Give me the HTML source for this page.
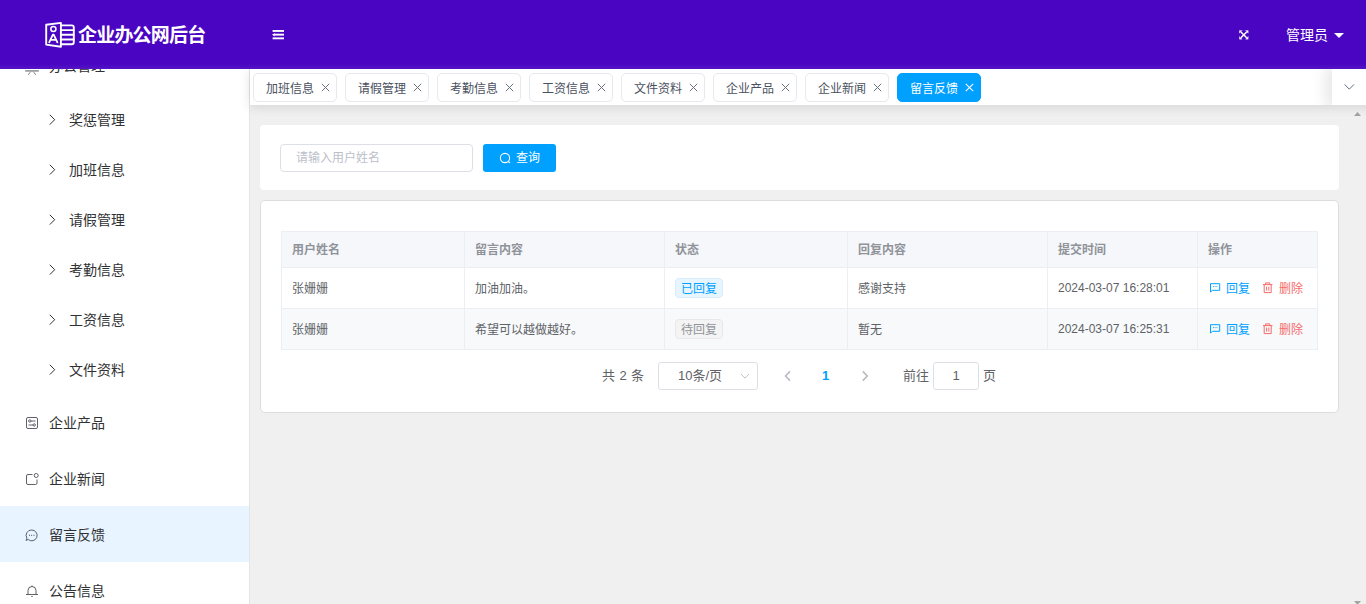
<!DOCTYPE html>
<html lang="zh-CN">
<head>
<meta charset="utf-8">
<title>企业办公网后台</title>
<style>
*{box-sizing:border-box;margin:0;padding:0}
html,body{width:1366px;height:604px;overflow:hidden;background:#f0f0f0}
body{font-family:"Liberation Sans","Noto Sans CJK SC",sans-serif;font-size:14px;color:#303133;position:relative}
.abs{position:absolute}
/* header */
#header{left:0;top:0;width:1366px;height:69px;background:linear-gradient(to bottom,#4a05c2 0,#4a05c2 64px,#5415c4 69px);z-index:10;}
#logo-text{left:78px;top:23px;font-size:19px;font-weight:700;color:#fff;line-height:26px;letter-spacing:-.8px;white-space:nowrap}
#user{left:1286px;top:25px;font-size:14px;color:#fff;line-height:20px;white-space:nowrap}
#caret{left:1334px;top:33px;width:0;height:0;border-left:5px solid transparent;border-right:5px solid transparent;border-top:5.5px solid #fff}
/* sidebar */
#sidebar{left:0;top:69px;width:250px;height:535px;background:#fff;overflow:hidden;z-index:5}
#sidebar .line{right:0;top:0;width:1px;height:100%;background:#e4e4e4}
.mi{position:absolute;left:0;width:250px;font-size:14px;color:#303133;line-height:20px;white-space:nowrap}
.mi span{position:absolute;top:0}
.mi svg{position:absolute}
.act{position:absolute;left:0;top:437px;width:249px;height:56px;background:#e8f4ff}
/* tabs */
#tabs{left:250px;top:69px;width:1146px;height:36px;background:#fff;z-index:6;box-shadow:0 2px 12px rgba(0,0,0,.12)}
.tag{position:absolute;top:4px;height:29px;width:84px;border:1px solid #e6e9ed;border-radius:5px;background:#fff;font-size:12px;line-height:27px;color:#495060;white-space:nowrap}
.tag span{position:absolute;left:12px;top:1.5px}
.tag svg{position:absolute;left:67px;top:9px}
.tag.on{background:#00a0ff;border-color:#00a0ff;color:#fff}
#more{left:1082px;top:0;width:34px;height:36px;background:#fff;box-shadow:-3px 0 15px 3px rgba(0,0,0,.1);clip-path:inset(0 0 0 -40px)}
/* cards */
#search{left:260px;top:125px;width:1079px;height:65px;background:#fff;border-radius:4px}
#inp{left:20px;top:19px;width:193px;height:28px;border:1px solid #dcdfe6;border-radius:4px;font-size:12px;color:#bcc0c9;line-height:27.5px;padding-left:15px}
#btn{left:223px;top:19px;width:73px;height:28px;background:#00a0ff;border-radius:3px;color:#fff;font-size:12px;line-height:29px}
#card{left:260px;top:200px;width:1079px;height:213px;background:#fff;border:1px solid #dddddd;border-radius:5px}
table{position:absolute;left:20px;top:30px;border-collapse:separate;border-spacing:0;table-layout:fixed;width:1037px;font-size:12px;border-top:1px solid #ebeef5;border-left:1px solid #ebeef5}
th,td{border-bottom:1px solid #ebeef5;border-right:1px solid #ebeef5;text-align:left;padding:0 10px;font-weight:400;color:#606266;white-space:nowrap;overflow:hidden;line-height:20px}
th{height:36px;background:#f5f7fa;color:#909399;font-weight:700}
td{height:41px}
tr.s td{background:#f7f9fb}
th>div{position:relative;top:0}td>div{position:relative;top:.5px}
.tg{display:inline-block;position:relative;top:-.5px;height:20px;line-height:20px;padding:0 5px;border:1px solid #d9ecff;background:#e6f5ff;color:#00a0ff;border-radius:4px;font-size:12px}
.tg.g{border-color:#e9e9eb;background:#f4f4f5;color:#909399}
.op{position:relative;display:inline-block;padding-left:18px;margin-right:9px;line-height:20px}
.op.r{padding-left:20px;margin-right:0}
.op svg{position:absolute;left:2px;top:4.3px}
.op.r svg{left:3px;top:3.3px}
.b{color:#00a0ff}.r{color:#f56c6c}
#pg{left:0;top:160.5px;width:1077px;height:28px;font-size:13px;color:#606266;line-height:28px}
#pg .abs{white-space:nowrap}
/* scrollbar */
#sb{left:1349px;top:105px;width:17px;height:499px;z-index:3}
</style>
</head>
<body>
<div id="header" class="abs">
  <svg class="abs" style="left:44px;top:21px" width="32" height="28" viewBox="0 0 32 28" fill="none" stroke="#fff" stroke-width="1.9" stroke-linejoin="round" stroke-linecap="round">
    <path d="M2.2 3.8 L16.9 1.9 L16.9 25.8 L2.2 23.6 Z"/>
    <path d="M17 4.4 H27.8 Q29.8 4.4 29.8 6.4 V21.2 Q29.8 23.2 27.8 23.2 H17"/>
    <path d="M17 9.1 H29.6 M17 13.8 H29.6 M17 18.5 H29.6"/>
    <ellipse cx="9.4" cy="8" rx="2.55" ry="2.45" stroke-width="1.5"/>
    <path d="M5.2 21.3 L8.9 13.6 H9.7 L13.4 21.3 M6.8 18.8 H11.8" stroke-width="1.8"/>
  </svg>
  <div id="logo-text" class="abs">企业办公网后台</div>
  <svg class="abs" style="left:272px;top:30px" width="12" height="10" viewBox="0 0 12 10" fill="#fff">
    <rect x="0.6" y="0" width="11.4" height="1.9"/><rect x="2.6" y="3.7" width="9.4" height="1.9"/><rect x="0.6" y="7.4" width="11.4" height="1.9"/>
    <path d="M0 4.65 L2.8 2.9 V6.4 Z"/>
  </svg>
  <svg class="abs" style="left:1239.4px;top:30px" width="9.6" height="9.6" viewBox="0 0 10 10" fill="#fff" stroke="#fff">
    <path d="M2 2 L8 8 M8 2 L2 8" stroke-width="1.5" fill="none"/>
    <path d="M0.4 0.4 H3.3 L0.4 3.3 Z M9.6 0.4 V3.3 L6.7 0.4 Z M0.4 9.6 V6.7 L3.3 9.6 Z M9.6 9.6 H6.7 L9.6 6.7 Z" stroke-width=".3"/>
  </svg>
  <div id="user" class="abs">管理员</div>
  <div id="caret" class="abs"></div>
</div>

<div id="sidebar" class="abs">
  <div class="act"></div>
  <div class="mi" style="top:-13px"><span style="left:49px">办公管理</span>
    <svg style="left:25px;top:4px" width="14" height="16" viewBox="0 0 14 16" fill="none" stroke="#8a8d94" stroke-width="1"><rect x="1.5" y="2" width="11" height="5"/><path d="M0.2 10.9 H13.8" stroke-width="1.5"/><path d="M5.6 11.6 L3.2 15 M8.4 11.6 L10.8 15"/></svg>
  </div>
  <div class="mi" style="top:41px"><svg style="left:47.5px;top:3.8px" width="8" height="12" viewBox="0 0 8 12" fill="none" stroke="#303133" stroke-width="1"><path d="M1.8 0.8 L6.7 5.7 L1.8 10.6"/></svg><span style="left:69px">奖惩管理</span></div>
  <div class="mi" style="top:91px"><svg style="left:47.5px;top:3.8px" width="8" height="12" viewBox="0 0 8 12" fill="none" stroke="#303133" stroke-width="1"><path d="M1.8 0.8 L6.7 5.7 L1.8 10.6"/></svg><span style="left:69px">加班信息</span></div>
  <div class="mi" style="top:141px"><svg style="left:47.5px;top:3.8px" width="8" height="12" viewBox="0 0 8 12" fill="none" stroke="#303133" stroke-width="1"><path d="M1.8 0.8 L6.7 5.7 L1.8 10.6"/></svg><span style="left:69px">请假管理</span></div>
  <div class="mi" style="top:191px"><svg style="left:47.5px;top:3.8px" width="8" height="12" viewBox="0 0 8 12" fill="none" stroke="#303133" stroke-width="1"><path d="M1.8 0.8 L6.7 5.7 L1.8 10.6"/></svg><span style="left:69px">考勤信息</span></div>
  <div class="mi" style="top:241px"><svg style="left:47.5px;top:3.8px" width="8" height="12" viewBox="0 0 8 12" fill="none" stroke="#303133" stroke-width="1"><path d="M1.8 0.8 L6.7 5.7 L1.8 10.6"/></svg><span style="left:69px">工资信息</span></div>
  <div class="mi" style="top:291px"><svg style="left:47.5px;top:3.8px" width="8" height="12" viewBox="0 0 8 12" fill="none" stroke="#303133" stroke-width="1"><path d="M1.8 0.8 L6.7 5.7 L1.8 10.6"/></svg><span style="left:69px">文件资料</span></div>
  <div class="mi" style="top:344px"><span style="left:49px">企业产品</span>
    <svg style="left:26px;top:4px" width="12" height="12" viewBox="0 0 12 12" fill="none" stroke="#4d5058" stroke-width=".9"><rect x="0.5" y="0.5" width="11" height="11" rx="1.5"/><path d="M5 4 H9.5 M2.5 8 H7"/><circle cx="3.8" cy="4" r="1.2"/><circle cx="8.2" cy="8" r="1.2"/></svg>
  </div>
  <div class="mi" style="top:400px"><span style="left:49px">企业新闻</span>
    <svg style="left:26px;top:4px" width="13" height="12" viewBox="0 0 13 12" fill="none" stroke="#4d5058" stroke-width=".9"><path d="M6.5 1.5 H2 Q0.5 1.5 0.5 3 V10 Q0.5 11.5 2 11.5 H9.5 Q11 11.5 11 10 V6.5"/><circle cx="10.2" cy="2.5" r="2"/></svg>
  </div>
  <div class="mi" style="top:456px"><span style="left:49px">留言反馈</span>
    <svg style="left:25px;top:3.5px" width="13" height="13" viewBox="0 0 13 13" fill="none" stroke="#4d5058" stroke-width=".9"><path d="M6.7 1 A5.4 5.4 0 1 1 3.2 10.5 L1 11.4 L1.9 9.2 A5.4 5.4 0 0 1 6.7 1 Z"/><path d="M4 6.4 H4.8 M6.3 6.4 H7.1 M8.6 6.4 H9.4" stroke-width="1.1"/></svg>
  </div>
  <div class="mi" style="top:512px"><span style="left:49px">公告信息</span>
    <svg style="left:25px;top:3px" width="14" height="14" viewBox="0 0 14 14" fill="none" stroke="#4d5058" stroke-width=".9"><path d="M1 10.5 H13 M3 10.5 V6.5 A4 4 0 0 1 11 6.5 V10.5 M7 2.5 V1.5 M6.3 12.5 H7.7"/></svg>
  </div>
  <div class="line abs"></div>
</div>

<div id="tabs" class="abs">
  <div class="tag" style="left:3px"><span>加班信息</span><svg width="9" height="9" viewBox="0 0 9 9" stroke="#6a7180" stroke-width="1" fill="none"><path d="M.8 .8 L8.2 8.2 M8.2 .8 L.8 8.2"/></svg></div>
  <div class="tag" style="left:95px"><span>请假管理</span><svg width="9" height="9" viewBox="0 0 9 9" stroke="#6a7180" stroke-width="1" fill="none"><path d="M.8 .8 L8.2 8.2 M8.2 .8 L.8 8.2"/></svg></div>
  <div class="tag" style="left:187px"><span>考勤信息</span><svg width="9" height="9" viewBox="0 0 9 9" stroke="#6a7180" stroke-width="1" fill="none"><path d="M.8 .8 L8.2 8.2 M8.2 .8 L.8 8.2"/></svg></div>
  <div class="tag" style="left:279px"><span>工资信息</span><svg width="9" height="9" viewBox="0 0 9 9" stroke="#6a7180" stroke-width="1" fill="none"><path d="M.8 .8 L8.2 8.2 M8.2 .8 L.8 8.2"/></svg></div>
  <div class="tag" style="left:371px"><span>文件资料</span><svg width="9" height="9" viewBox="0 0 9 9" stroke="#6a7180" stroke-width="1" fill="none"><path d="M.8 .8 L8.2 8.2 M8.2 .8 L.8 8.2"/></svg></div>
  <div class="tag" style="left:463px"><span>企业产品</span><svg width="9" height="9" viewBox="0 0 9 9" stroke="#6a7180" stroke-width="1" fill="none"><path d="M.8 .8 L8.2 8.2 M8.2 .8 L.8 8.2"/></svg></div>
  <div class="tag" style="left:555px"><span>企业新闻</span><svg width="9" height="9" viewBox="0 0 9 9" stroke="#6a7180" stroke-width="1" fill="none"><path d="M.8 .8 L8.2 8.2 M8.2 .8 L.8 8.2"/></svg></div>
  <div class="tag on" style="left:647px"><span>留言反馈</span><svg width="9" height="9" viewBox="0 0 9 9" stroke="#fff" stroke-width="1.1" fill="none"><path d="M.8 .8 L8.2 8.2 M8.2 .8 L.8 8.2"/></svg></div>
  <div id="more" class="abs"><svg class="abs" style="left:12px;top:14px" width="11" height="8" viewBox="0 0 11 8" fill="none" stroke="#5f6b85" stroke-width="1"><path d="M0.6 1.4 L5.3 6.2 L10 1.4"/></svg></div>
</div>

<div id="search" class="abs" style="z-index:2">
  <div id="inp" class="abs">请输入用户姓名</div>
  <div id="btn" class="abs"><svg class="abs" style="left:16px;top:8px" width="13" height="13" viewBox="0 0 13 13" fill="none" stroke="#fff" stroke-width="1.1"><circle cx="6" cy="6" r="4.6"/><path d="M9.4 9.4 L11 11"/></svg><span class="abs" style="left:33px;top:0">查询</span></div>
</div>

<div id="card" class="abs">
  <table>
    <colgroup><col style="width:183px"><col style="width:200px"><col style="width:183px"><col style="width:200px"><col style="width:150px"><col style="width:120px"></colgroup>
    <tr><th><div>用户姓名</div></th><th><div>留言内容</div></th><th><div>状态</div></th><th><div>回复内容</div></th><th><div>提交时间</div></th><th><div>操作</div></th></tr>
    <tr><td><div>张姗姗</div></td><td><div>加油加油。</div></td><td><div><span class="tg">已回复</span></div></td><td><div>感谢支持</div></td><td><div style="top:-.5px">2024-03-07 16:28:01</div></td>
      <td><div><span class="op b"><svg width="11" height="10" viewBox="0 0 11 10" fill="none" stroke="#00a0ff" stroke-width="1"><path d="M0.5 0.7 H9.7 V7.3 H2.6 L0.5 9 Z"/><path d="M3 3.6 H3.9 M4.7 3.6 H5.6 M6.4 3.6 H7.3" stroke-width=".9"/></svg>回复</span><span class="op r"><svg width="12" height="12" viewBox="0 0 12 12" fill="none" stroke="#f56c6c" stroke-width="1"><path d="M1 2.6 H10.4 M3.6 2.6 V0.9 H7.8 V2.6 M2.2 2.6 V10.6 H9.2 V2.6 M4.6 4.6 V8.6 M6.8 4.6 V8.6"/></svg>删除</span></div></td></tr>
    <tr class="s"><td><div>张姗姗</div></td><td><div>希望可以越做越好。</div></td><td><div><span class="tg g">待回复</span></div></td><td><div>暂无</div></td><td><div style="top:-.5px">2024-03-07 16:25:31</div></td>
      <td><div><span class="op b"><svg width="11" height="10" viewBox="0 0 11 10" fill="none" stroke="#00a0ff" stroke-width="1"><path d="M0.5 0.7 H9.7 V7.3 H2.6 L0.5 9 Z"/><path d="M3 3.6 H3.9 M4.7 3.6 H5.6 M6.4 3.6 H7.3" stroke-width=".9"/></svg>回复</span><span class="op r"><svg width="12" height="12" viewBox="0 0 12 12" fill="none" stroke="#f56c6c" stroke-width="1"><path d="M1 2.6 H10.4 M3.6 2.6 V0.9 H7.8 V2.6 M2.2 2.6 V10.6 H9.2 V2.6 M4.6 4.6 V8.6 M6.8 4.6 V8.6"/></svg>删除</span></div></td></tr>
  </table>
  <div id="pg" class="abs">
    <span class="abs" style="left:341px;word-spacing:.8px">共 2 条</span>
    <div class="abs" style="left:397px;top:0;width:100px;height:28px;border:1px solid #dcdfe6;border-radius:3px"><span class="abs" style="left:19px;top:-1px">10条/页</span><svg class="abs" style="left:81px;top:10px" width="10" height="7" viewBox="0 0 10 7" fill="none" stroke="#c0c4cc" stroke-width="1"><path d="M1 1 L5 5.2 L9 1"/></svg></div>
    <svg class="abs" style="left:523px;top:8px" width="8" height="12" viewBox="0 0 8 12" fill="none" stroke="#b7bbc4" stroke-width="1.6"><path d="M6 1.4 L1.6 6 L6 10.6"/></svg>
    <span class="abs" style="left:561px;color:#00a0ff;font-weight:700">1</span>
    <svg class="abs" style="left:600px;top:8px" width="8" height="12" viewBox="0 0 8 12" fill="none" stroke="#b7bbc4" stroke-width="1.6"><path d="M1.8 1.4 L6.2 6 L1.8 10.6"/></svg>
    <span class="abs" style="left:642px">前往</span>
    <div class="abs" style="left:672px;top:0;width:46px;height:28px;border:1px solid #dcdfe6;border-radius:3px;text-align:center;line-height:26px">1</div>
    <span class="abs" style="left:722px">页</span>
  </div>
</div>

<div id="sb" class="abs">
  <svg class="abs" style="left:5px;top:7px" width="7" height="4" viewBox="0 0 7 4" fill="#a3a3a3"><path d="M0 4 L3.5 0 L7 4 Z"/></svg>
  <svg class="abs" style="left:5px;top:496px" width="7" height="4" viewBox="0 0 7 4" fill="#a3a3a3"><path d="M0 0 L3.5 4 L7 0 Z"/></svg>
</div>
</body>
</html>
